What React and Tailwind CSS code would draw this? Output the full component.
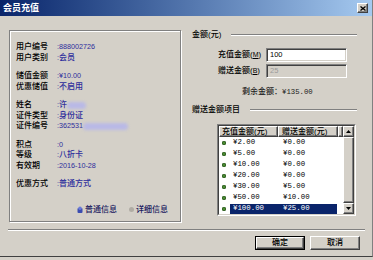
const FONT = "font-[family-name:'Liberation_Sans','Noto_Sans_CJK_SC',sans-serif]";

function Raised({ className = "", children }) {
  return (
    <div
      className={
        "bg-[#d4d0c8] border border-t-white border-l-white border-b-[#404040] border-r-[#404040] shadow-[inset_-1px_-1px_0_#808080] " +
        className
      }
    >
      {children}
    </div>
  );
}

function Etched({ className = "" }) {
  return <div className={"h-[2px] border-t border-t-[#808080] border-b border-b-white " + className} />;
}

function Num({ children, className = "" }) {
  return <span className={"font-[family-name:'Liberation_Sans',sans-serif] text-[7.2px] " + className}>{children}</span>;
}

function InfoRow({ label, children }) {
  return (
    <div className="flex items-center h-[10.5px] leading-[10.5px]">
      <span className="w-[41px] text-black">{label}</span>
      <span className="text-[#2c2c9c] flex items-center">
        <Num>:</Num>
        {children}
      </span>
    </div>
  );
}

function Blur({ w }) {
  return <span className="inline-block h-[7px] rounded-full bg-[#b9b9e6] blur-[1.5px]" style={{ width: w }} />;
}

function Field({ label, sc, value, disabled }) {
  return (
    <div className="flex items-center pl-[26px]">
      <span className="w-[48px] text-black whitespace-nowrap">
        {label}
        <span className="text-[8px]">(</span>
        <span className="underline text-[7px]">{sc}</span>
        <span className="text-[8px]">)</span>
      </span>
      <div
        className={
          "w-[81px] h-[14px] border border-t-[#808080] border-l-[#808080] border-b-white border-r-white shadow-[inset_1px_1px_0_#404040,inset_-1px_-1px_0_#d4d0c8] flex items-center pl-[3px] " +
          (disabled ? "bg-[#d4d0c8] text-[#9a9a9a]" : "bg-white text-black")
        }
      >
        <span className="font-[family-name:'Liberation_Sans',sans-serif] text-[7.5px]">{value}</span>
      </div>
    </div>
  );
}

function Tri({ up }) {
  return (
    <svg width="5" height="3" viewBox="0 0 5 3">
      {up ? <path d="M2.5 0 L5 3 L0 3 Z" fill="#000" /> : <path d="M0 0 L5 0 L2.5 3 Z" fill="#000" />}
    </svg>
  );
}

export default function App() {
  const rows = [
    ["2.00", "0.00"],
    ["5.00", "0.00"],
    ["10.00", "0.00"],
    ["20.00", "0.00"],
    ["30.00", "5.00"],
    ["50.00", "10.00"],
    ["100.00", "25.00"],
  ];
  return (
    <div className={"w-[373px] h-[260px] bg-[#d4d0c8] overflow-hidden text-[8px] font-medium " + FONT}>
      <div className="h-[257px] flex flex-col border-b border-b-[#404040] border-r border-r-[#808080]">
        {/* title bar */}
        <div className="h-[16px] flex items-center justify-between pl-[3px] pr-[4px] bg-linear-to-r from-[#0a246a] to-[#a6caf0]">
          <span className="text-white font-bold text-[9px] leading-none">会员充值</span>
          <Raised className="w-[11px] h-[10px] flex items-center justify-center">
            <svg width="6" height="5" viewBox="0 0 6 5">
              <path d="M0.5 0.5 L5.5 4.5 M5.5 0.5 L0.5 4.5" stroke="#000" strokeWidth="1.3" />
            </svg>
          </Raised>
        </div>

        <div className="flex-1 flex flex-col pt-[14px]">
          <div className="flex pl-[9px]">
            {/* left panel */}
            <div className="w-[172px] h-[192px] border border-[#808080] shadow-[inset_1px_1px_0_#fff,1px_1px_0_#fff] flex flex-col pl-[6px] pt-[11px]">
              <div className="flex flex-col gap-[8px]">
                <div>
                  <InfoRow label="用户编号"><Num>888002726</Num></InfoRow>
                  <InfoRow label="用户类别">会员</InfoRow>
                </div>
                <div>
                  <InfoRow label="储值金额"><Num>¥10.00</Num></InfoRow>
                  <InfoRow label="优惠储值">不启用</InfoRow>
                </div>
                <div>
                  <InfoRow label="姓名">
                    许<Blur w="19px" />
                  </InfoRow>
                  <InfoRow label="证件类型">身份证</InfoRow>
                  <InfoRow label="证件编号">
                    <Num>362531</Num>
                    <Blur w="45px" />
                  </InfoRow>
                </div>
                <div>
                  <InfoRow label="积点"><Num>0</Num></InfoRow>
                  <InfoRow label="等级">八折卡</InfoRow>
                  <InfoRow label="有效期"><Num>2016-10-28</Num></InfoRow>
                </div>
                <div>
                  <InfoRow label="优惠方式">普通方式</InfoRow>
                </div>
              </div>
              <div className="mt-[15px] flex items-center justify-end pr-[12px] h-[10.5px]">
                <svg width="6" height="7" viewBox="0 0 6 7" className="mr-[2px]">
                  <rect x="0.5" y="2" width="5" height="5" rx="1" fill="#3a4cb0" />
                  <circle cx="3" cy="2.2" r="1.8" fill="#6a7ad8" />
                </svg>
                <span className="text-[#1a1a60]">普通信息</span>
                <span className="ml-[12px] mr-[2px] inline-block w-[5px] h-[5px] rounded-full bg-[#b0aca4]" />
                <span className="text-[#1a1a60]">详细信息</span>
              </div>
            </div>

            {/* right panel */}
            <div className="ml-[7px] w-[172px] flex flex-col pl-[4px]">
              <div className="flex items-center h-[10px]">
                <span className="whitespace-nowrap">金额(元)</span>
                <Etched className="flex-1 ml-[10px] mr-[3px]" />
              </div>
              <div className="mt-[8px] flex flex-col gap-[2px]">
                <Field label="充值金额" sc="M" value="100" />
                <Field label="赠送金额" sc="B" value="25" disabled />
              </div>
              <div className="mt-[9px] pl-[50px] h-[10px] flex items-center whitespace-nowrap text-[#202020]">
                剩余金额：<span className="font-[family-name:'Liberation_Mono',monospace] text-[7.3px]">¥135.00</span>
              </div>
              <div className="mt-[8px] flex items-center h-[10px]">
                <span className="whitespace-nowrap">赠送金额项目</span>
                <Etched className="flex-1 ml-[10px] mr-[3px]" />
              </div>
              <div className="mt-[9px] ml-[25px] w-[139px] h-[92px] border border-t-[#808080] border-l-[#808080] border-b-white border-r-white">
                <div className="w-full h-full border border-t-[#404040] border-l-[#404040] border-b-[#d4d0c8] border-r-[#d4d0c8] flex bg-white">
                  <div className="flex-1 flex flex-col">
                    <div className="flex h-[11px]">
                      <Raised className="w-[59px] h-[11px] flex items-center pl-[2px] whitespace-nowrap">充值金额(元)</Raised>
                      <Raised className="w-[60px] h-[11px] flex items-center pl-[3px] whitespace-nowrap">赠送金额(元)</Raised>
                      <Raised className="flex-1 h-[11px]" />
                    </div>
                    {rows.map((r, i) => {
                      const sel = i === rows.length - 1;
                      return (
                        <div key={i} className="flex items-center h-[11px]">
                          <div className="w-[11px] flex items-center pl-[3px]">
                            <span className="w-[4px] h-[4px] rounded-full bg-[#4a8a30] shadow-[inset_0_0_0_0.6px_#1f4a15]" />
                          </div>
                          <div
                            className={
                              "w-[107px] h-[10px] flex items-center font-[family-name:'Liberation_Mono',monospace] text-[7.4px] " +
                              (sel ? "bg-[#0a246a] text-white" : "text-black")
                            }
                          >
                            <span className="w-[50px] pl-[3px]">¥{r[0]}</span>
                            <span className="pl-[3px]">¥{r[1]}</span>
                          </div>
                        </div>
                      );
                    })}
                  </div>
                  <div className="w-[11px] flex flex-col">
                    <Raised className="h-[11px] flex items-center justify-center"><Tri up /></Raised>
                    <Raised className="flex-1" />
                    <Raised className="h-[11px] flex items-center justify-center"><Tri /></Raised>
                  </div>
                </div>
              </div>
            </div>
          </div>

          <Etched className="mt-[7px] ml-[8px] mr-[7px]" />

          <div className="mt-[5px] flex justify-end pr-[12px] gap-[5px]">
            <div className="w-[50px] h-[14px] border border-black">
              <Raised className="w-full h-full flex items-center justify-center">确定</Raised>
            </div>
            <Raised className="w-[50px] h-[14px] flex items-center justify-center">取消</Raised>
          </div>
        </div>
      </div>
    </div>
  );
}
